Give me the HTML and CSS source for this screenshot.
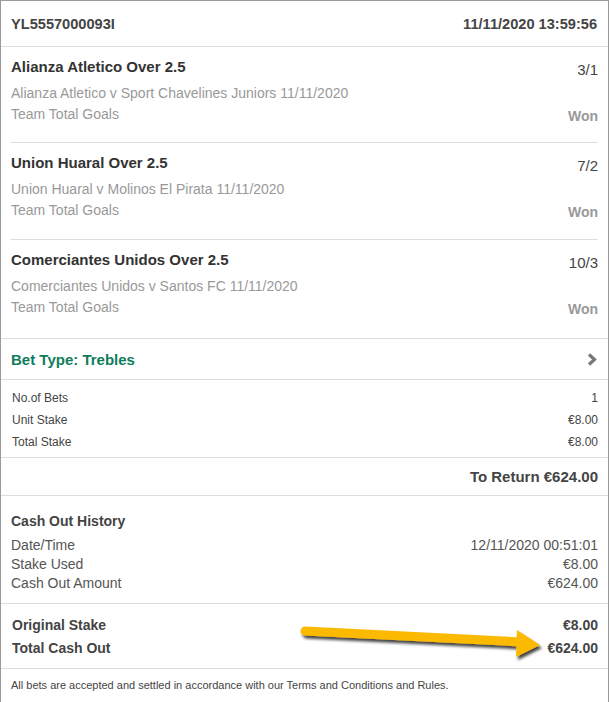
FILE: index.html
```html
<!DOCTYPE html>
<html>
<head>
<meta charset="utf-8">
<link rel="stylesheet" href="styles.css">
</head>
<body>
<div class="card">
  <div class="header">
    <span>YL5557000093I</span>
    <span>11/11/2020 13:59:56</span>
  </div>
  <div class="selections">
    <div class="sel">
      <div class="sel-top"><span class="sel-title">Alianza Atletico Over 2.5</span><span class="odds">3/1</span></div>
      <div class="desc">Alianza Atletico v Sport Chavelines Juniors 11/11/2020</div>
      <div class="sel-bottom"><span class="desc">Team Total Goals</span><span class="won">Won</span></div>
    </div>
    <div class="sel">
      <div class="sel-top"><span class="sel-title">Union Huaral Over 2.5</span><span class="odds">7/2</span></div>
      <div class="desc">Union Huaral v Molinos El Pirata 11/11/2020</div>
      <div class="sel-bottom"><span class="desc">Team Total Goals</span><span class="won">Won</span></div>
    </div>
    <div class="sel last">
      <div class="sel-top"><span class="sel-title">Comerciantes Unidos Over 2.5</span><span class="odds">10/3</span></div>
      <div class="desc">Comerciantes Unidos v Santos FC 11/11/2020</div>
      <div class="sel-bottom"><span class="desc">Team Total Goals</span><span class="won">Won</span></div>
    </div>
  </div>
  <div class="bettype">
    <span>Bet Type: Trebles</span>
    <svg class="chev" width="10" height="13" viewBox="0 0 10 13"><path d="M2 1.5 L7.5 6.5 L2 11.5" fill="none" stroke="#777" stroke-width="3.2"/></svg>
  </div>
  <div class="stakes">
    <div class="srow"><span>No.of Bets</span><span>1</span></div>
    <div class="srow"><span>Unit Stake</span><span>€8.00</span></div>
    <div class="srow"><span>Total Stake</span><span>€8.00</span></div>
  </div>
  <div class="toreturn">To Return €624.00</div>
  <div class="cashout">
    <div class="co-title">Cash Out History</div>
    <div class="crow"><span>Date/Time</span><span>12/11/2020 00:51:01</span></div>
    <div class="crow"><span>Stake Used</span><span>€8.00</span></div>
    <div class="crow"><span>Cash Out Amount</span><span>€624.00</span></div>
  </div>
  <div class="totals">
    <div class="trow"><span>Original Stake</span><span>€8.00</span></div>
    <div class="trow"><span>Total Cash Out</span><span>€624.00</span></div>
  </div>
  <div class="footer">All bets are accepted and settled in accordance with our Terms and Conditions and Rules.</div>
</div>
<svg class="arrow" width="610" height="702" viewBox="0 0 610 702">
  <defs>
    <filter id="sh" x="-10%" y="-50%" width="120%" height="200%">
      <feDropShadow dx="2" dy="3" stdDeviation="1.6" flood-color="#000" flood-opacity="0.75"/>
    </filter>
  </defs>
  <g filter="url(#sh)">
    <line x1="305" y1="631" x2="522" y2="642" stroke="#fbb900" stroke-width="9" stroke-linecap="round"/>
    <path d="M517 630 L540 645 L516 657 Z" fill="#fbb900"/>
  </g>
</svg>
</body>
</html>
```
FILE: styles.css
```css
html, body {
  margin: 0;
  padding: 0;
  background: #fff;
}
body {
  font-family: "Liberation Sans", Arial, sans-serif;
  color: #444;
  position: relative;
  width: 610px;
  height: 702px;
  overflow: hidden;
}
.card {
  width: 607px;
  border: 1px solid #9a9a9a;
  border-bottom: none;
  min-height: 701px;
}
.header {
  height: 45px;
  padding: 0 11px 0 10px;
  display: flex;
  justify-content: space-between;
  align-items: center;
  font-weight: bold;
  font-size: 14.6px;
  color: #444;
  border-bottom: 1px solid #ddd;
}
.selections {
  border-bottom: 1px solid #ddd;
}
.sel {
  margin: 0 10px 0 10px;
  padding: 10px 0 18px 0;
  border-bottom: 1px solid #ddd;
}
.sel:first-child {
  padding-bottom: 17px;
}
.sel.last {
  border-bottom: none;
  padding-bottom: 20px;
}
.sel-top {
  display: flex;
  justify-content: space-between;
  align-items: center;
  height: 18px;
}
.sel-title {
  font-weight: bold;
  font-size: 15px;
  color: #333;
}
.odds {
  font-size: 15px;
  color: #444;
  position: relative;
  top: 3px;
}
.desc {
  font-size: 14px;
  color: #999;
  line-height: 21px;
}
.sel-top + .desc {
  margin-top: 8px;
}
.sel-bottom {
  display: flex;
  justify-content: space-between;
  align-items: center;
  height: 21px;
}
.won {
  font-weight: bold;
  font-size: 14px;
  color: #999;
  position: relative;
  top: 1px;
}
.bettype {
  height: 40px;
  padding: 0 11px 0 10px;
  display: flex;
  justify-content: space-between;
  align-items: center;
  font-weight: bold;
  font-size: 15px;
  color: #0f7c5a;
  border-bottom: 1px solid #ddd;
}
.stakes {
  padding: 7px 10px 4px 11px;
  border-bottom: 1px solid #ddd;
}
.srow {
  display: flex;
  justify-content: space-between;
  height: 22px;
  line-height: 22px;
  font-size: 12px;
  color: #444;
}
.toreturn {
  height: 37px;
  line-height: 37px;
  text-align: right;
  padding-right: 10px;
  font-weight: bold;
  font-size: 15px;
  color: #444;
  border-bottom: 1px solid #ddd;
}
.cashout {
  padding: 15px 10px 10px 10px;
  border-bottom: 1px solid #ddd;
}
.co-title {
  font-weight: bold;
  font-size: 14px;
  line-height: 20px;
  margin-bottom: 5px;
}
.crow {
  display: flex;
  justify-content: space-between;
  height: 19px;
  line-height: 19px;
  font-size: 14px;
  color: #555;
}
.totals {
  padding: 10px 10px 8px 11px;
  border-bottom: 1px solid #ddd;
}
.trow {
  display: flex;
  justify-content: space-between;
  height: 23px;
  line-height: 23px;
  font-weight: bold;
  font-size: 14px;
  color: #444;
}
.footer {
  padding: 0 10px;
  height: 33px;
  line-height: 33px;
  font-size: 11px;
  color: #444;
}
.arrow {
  position: absolute;
  left: 0;
  top: 0;
  pointer-events: none;
}
```
